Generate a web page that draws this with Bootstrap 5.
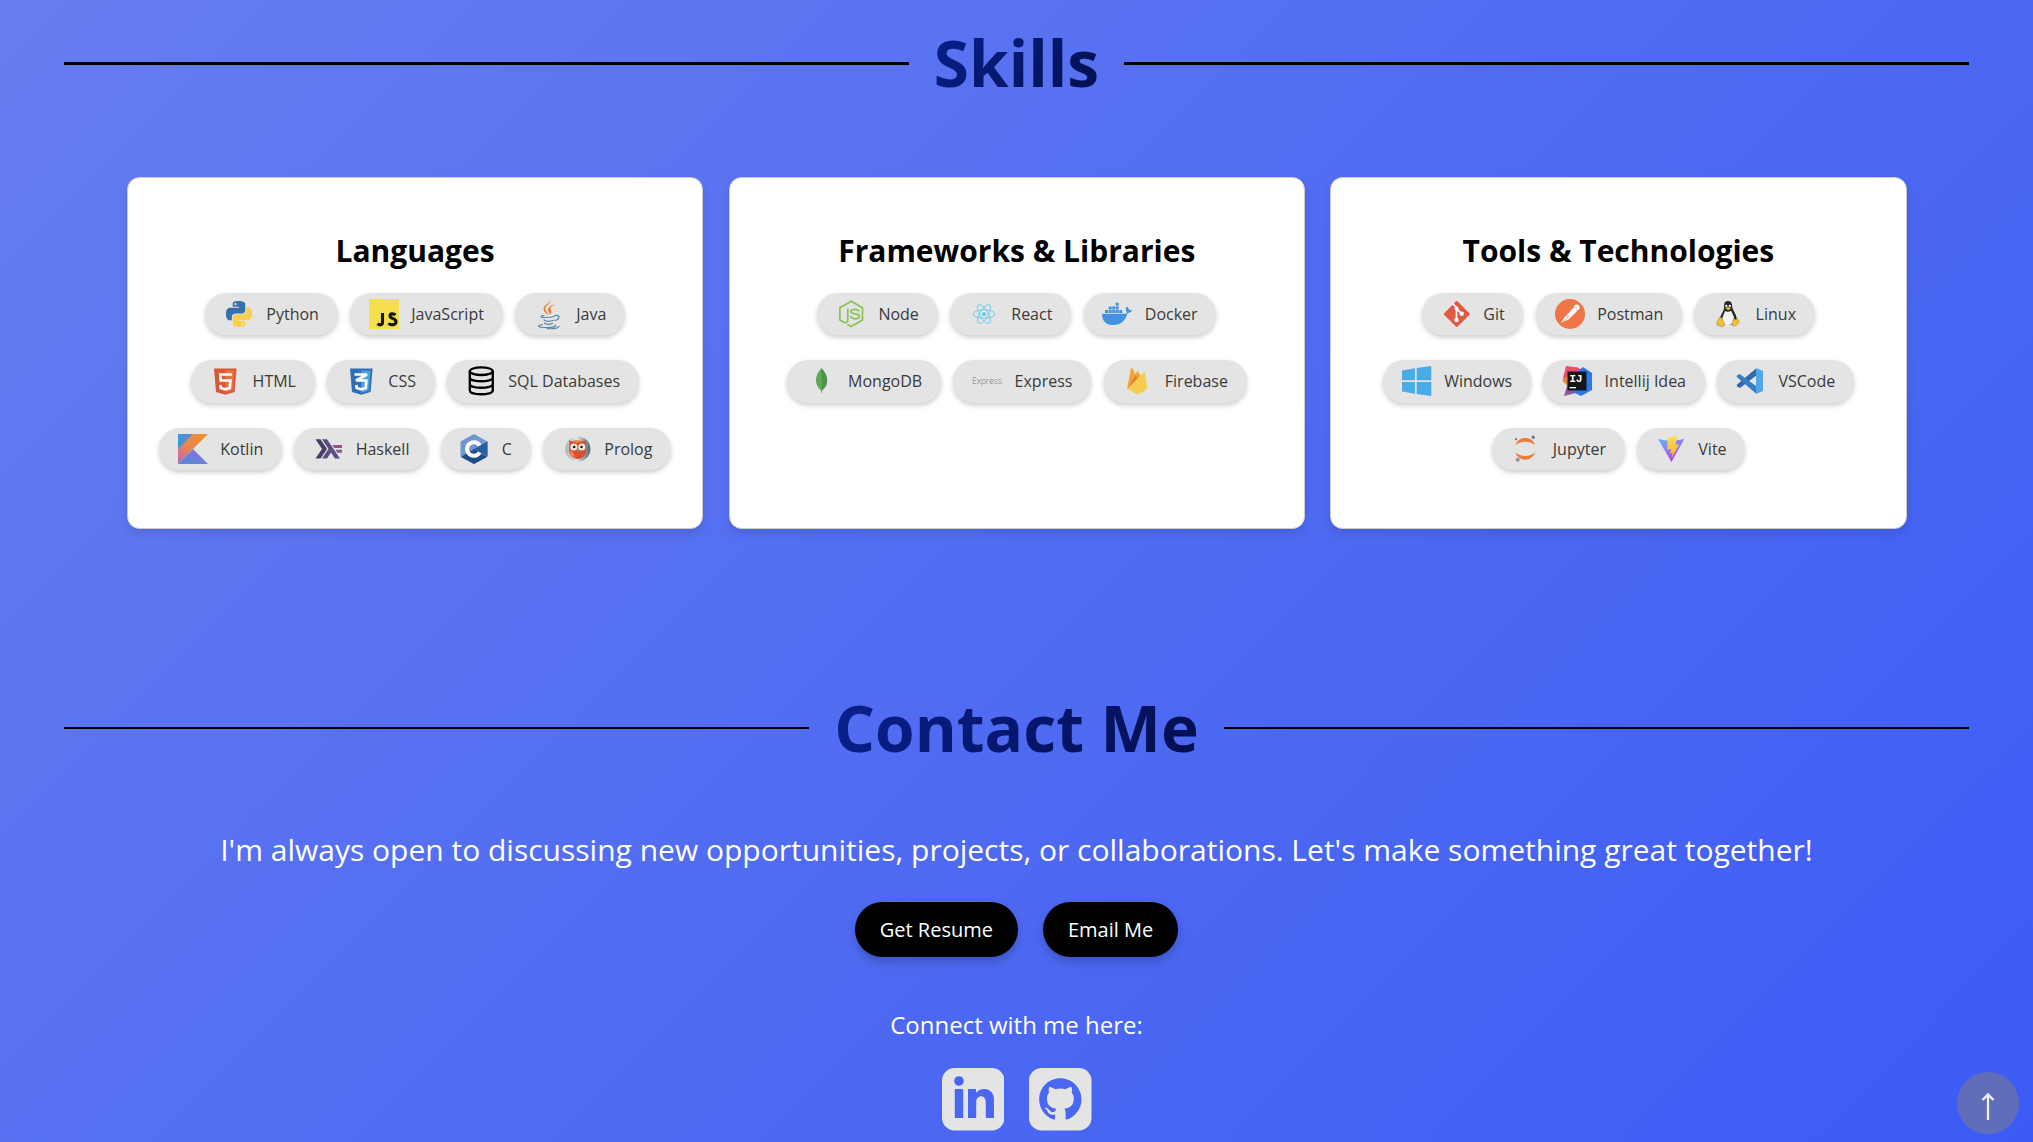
<!DOCTYPE html>
<html lang="en">
<head>
<meta charset="utf-8">
<meta name="viewport" content="width=device-width, initial-scale=1">
<title>Portfolio</title>
<link href="https://cdn.jsdelivr.net/npm/bootstrap@5.3.0/dist/css/bootstrap.min.css" rel="stylesheet">
<style>
html,body{height:100%;overflow:hidden}
body{font-family:"Open Sans","Noto Sans",sans-serif;background:linear-gradient(135deg,#677ef0 0%,#5973f1 30%,#4d69f2 60%,#3c5bf5 100%) no-repeat;color:#fff}
.rule-title{padding:0 64px;gap:25px}
.rule-title h2{font-size:64px;line-height:87px;font-weight:700;margin:-2px 0 0;background:linear-gradient(135deg,#092192,#030e4a);-webkit-background-clip:text;background-clip:text;color:transparent}
.contact-title h2{margin-top:0}
.rule-line{flex:1;height:3px;background:#000}
.rule-line.thin{height:2px}
.skills-title{padding-top:20px;height:107px}
.skill-grid{padding:70px 126.500px 0 127px;gap:25.5px}
.skill-card{flex:1 1 0;height:352px;border:1px solid #ccc;border-radius:12.5px;box-shadow:0 5px 10px rgba(0,0,0,.1);padding-top:52px;color:#000}
.skill-card h3{font-size:30px;line-height:41px;font-weight:700;margin:0 0 21.5px}
.chip-row{gap:12.4px;margin-bottom:25px}
.chip{height:42.5px;padding:0 18.75px;gap:12.5px;border-radius:21px;background:#e4e4e4;color:#3a3a3a;font-size:16px;font-weight:400;box-shadow:0 2.5px 5px rgba(0,0,0,.2);white-space:nowrap}
.chip svg{width:30px;height:30px;flex:none;opacity:.9;overflow:visible}
.contact-title{margin-top:155px;height:87px}
.contact-lead{font-size:30px;line-height:41px;margin:58px 0 32px}
.pill{height:55px;padding:0 25px;border-radius:28px;background:#000;color:#fff;font-size:20px;box-shadow:0 5px 10px rgba(0,0,0,.2);border:0}
.connect{font-size:24px;line-height:34px;margin:51px 0 26px}
.social{gap:25px}
.social svg{width:62.5px;height:62.5px}
.to-top{position:fixed;right:14px;bottom:8px;width:62px;height:62px;border-radius:50%;background:#606eb9}
</style>
<script src="https://cdn.jsdelivr.net/npm/bootstrap@5.3.0/dist/js/bootstrap.bundle.min.js"></script>
</head>
<body>
<section>
<div class="rule-title skills-title d-flex align-items-center"><span class="rule-line"></span><h2>Skills</h2><span class="rule-line"></span></div>
<div class="skill-grid d-flex">

<div class="skill-card bg-white text-center">
<h3>Languages</h3>
<div class="chip-row d-flex justify-content-center">
<span class="chip d-flex align-items-center"><svg viewBox="0 0 30 30"><g transform="translate(2 2) scale(1.08)"><path fill="#2565a8" d="M14.25.18l.9.2.73.26.59.3.45.32.34.34.25.34.16.33.1.3.04.26.02.2-.01.13V8.5l-.05.63-.13.55-.21.46-.26.38-.3.31-.33.25-.35.19-.35.14-.33.1-.3.07-.26.04-.21.02H8.77l-.69.05-.59.14-.5.22-.41.27-.33.32-.27.35-.2.36-.15.37-.1.35-.07.32-.04.27-.02.21v3.06H3.17l-.21-.03-.28-.07-.32-.12-.35-.18-.36-.26-.36-.36-.35-.46-.32-.59-.28-.73-.21-.88-.14-1.05-.05-1.23.06-1.22.16-1.04.24-.87.32-.71.36-.57.4-.44.42-.33.42-.24.4-.16.36-.1.32-.05.24-.01h.16l.06.01h8.16v-.83H6.18l-.01-2.75-.02-.37.05-.34.11-.31.17-.28.25-.26.31-.23.38-.2.44-.18.51-.15.58-.12.64-.1.71-.06.77-.04.84-.02 1.27.05zm-6.3 1.98l-.23.33-.08.41.08.41.23.34.33.22.41.09.41-.09.33-.22.23-.34.08-.41-.08-.41-.23-.33-.33-.22-.41-.09-.41.09z"/><path fill="#fbce3e" d="M21.1 6.11l.28.06.32.12.35.18.36.27.36.35.35.47.32.59.28.73.21.88.14 1.04.05 1.23-.06 1.23-.16 1.04-.24.86-.32.71-.36.57-.4.45-.42.33-.42.24-.4.16-.36.09-.32.05-.24.02-.16-.01h-8.22v.82h5.84l.01 2.76.02.36-.05.34-.11.31-.17.29-.25.25-.31.24-.38.2-.44.17-.51.15-.58.13-.64.09-.71.07-.77.04-.84.01-1.27-.04-1.07-.14-.9-.2-.73-.25-.59-.3-.45-.33-.34-.34-.25-.34-.16-.33-.1-.3-.04-.25-.02-.2.01-.13v-5.34l.05-.64.13-.54.21-.46.26-.38.3-.32.33-.24.35-.2.35-.14.33-.1.3-.06.26-.04.21-.02.13-.01h5.84l.69-.05.59-.14.5-.21.41-.28.33-.32.27-.35.2-.36.15-.36.1-.35.07-.32.04-.28.02-.21V6.07h2.09l.14.01zm-6.47 14.25l-.23.33-.08.41.08.41.23.33.33.23.41.08.41-.08.33-.23.23-.33.08-.41-.08-.41-.23-.33-.33-.23-.41-.08-.41.08z"/></g></svg>Python</span>
<span class="chip d-flex align-items-center"><svg viewBox="0 0 30 30"><path fill="#f5e03c" d="M0 0h30v30H0z"/><path d="M13.500 14v9c0 3.500-3 3.500-5 1.800M26.500 16c-1.700-1.700-5.500-1.600-5.500.9 0 3 6 2 6 5.800 0 3.500-5.500 3.800-7.500 1.500" fill="none" stroke="#000" stroke-width="3.100"/></svg>JavaScript</span>
<span class="chip d-flex align-items-center"><svg viewBox="0 0 30 30" fill="none"><path d="M16.500 0c1.500 5-6.500 6.500-5 10.500.6 2 2.500 3.200 3 5.500-3.500-2-6-5-4.500-8C11.500 5 17 4 16.500 0zM21.500 5.500c-3 1.200-6 3-4.500 5.500 1 1.500 1 3-1.500 5 1-2.500-2.500-3.500-1.500-6 .8-2.500 4-4 7.500-4.500z" fill="#ea7523"/><g stroke="#4b7ea0" stroke-width="1.200" stroke-linecap="round"><path d="M10 16.500c-5 .8-3.500 2 1 2 4 0 7-.3 9.500-1M21 16.500c5-1 5.500 3.500.2 5M10 21c2.500 1.600 7 1.200 9.500.2M10.500 24.200c2 1.300 5.500 1.200 8 .2M8.500 25.500c-7 1.200-4 3 4 3 7 0 11-1 8.500-2.500M13 29.700c5 .2 11-.4 12-2.200"/></g></svg>Java</span>
</div>
<div class="chip-row d-flex justify-content-center">
<span class="chip d-flex align-items-center"><svg viewBox="0 0 30 30"><path fill="#d94a23" d="M4 2.500h22.600l-2 23.500-9.300 2.700L6 26z"/><path fill="#ea6434" d="M15.300 4.500h9.200l-1.700 20-7.500 2.200z"/><path d="M22 8.500H10.300l.5 6h9.600l-.6 7.500-4.500 1.300L10.700 22l-.3-3.200" fill="none" stroke="#fff" stroke-width="2.700"/></svg>HTML</span>
<span class="chip d-flex align-items-center"><svg viewBox="0 0 30 30"><path fill="#1c62b4" d="M4 2.500h22.600l-2 23.500-9.300 2.700L6 26z"/><path fill="#36a0db" d="M15.300 4.500h9.200l-1.700 20-7.500 2.200z"/><path d="M8.500 8.500H21L10 14.500h10.300l-.5 7.500-4.500 1.300L10.700 22l-.3-3" fill="none" stroke="#fff" stroke-width="2.700"/></svg>CSS</span>
<span class="chip d-flex align-items-center"><svg viewBox="0 0 30 30" fill="none" stroke="#000" stroke-width="2.300" class="opacity-100"><ellipse cx="15.300" cy="5.200" rx="11.500" ry="3.800"/><path d="M3.800 5v19.500c0 5 23 5 23 0V5M3.800 11.500c0 5 23 5 23 0M3.800 18c0 5 23 5 23 0"/></svg>SQL Databases</span>
</div>
<div class="chip-row d-flex justify-content-center">
<span class="chip d-flex align-items-center"><svg viewBox="0 0 30 30"><defs><linearGradient id="k1" x1="0" y1="1" x2="1" y2="0"><stop offset="0" stop-color="#bd56b4"/><stop offset=".42" stop-color="#e87b45"/><stop offset="1" stop-color="#f68a09"/></linearGradient><linearGradient id="k2" x1="0" y1="1" x2="1" y2="0"><stop offset="0" stop-color="#3b83dc"/><stop offset="1" stop-color="#8b63dd"/></linearGradient><linearGradient id="k3" x1="0" x2="1"><stop offset="0" stop-color="#2596d2"/><stop offset="1" stop-color="#6472d8"/></linearGradient></defs><path fill="url(#k3)" d="M0 0h16L0 16z"/><path fill="url(#k1)" d="M15 0h15L0 30V15z"/><path fill="url(#k2)" d="M0 30l15-15 15 15z"/></svg>Kotlin</span>
<span class="chip d-flex align-items-center"><svg viewBox="0 0 30 30"><path fill="#382d56" d="M2.500 24.500L9 15 2.500 5.200h5L14 15l-6.500 9.500z"/><path fill="#4f3c78" d="M9 24.500L15.500 15 9 5.200h5l13 19.300h-5L18 18.400l-4 6.100z"/><path fill="#85458b" d="M19.200 11H29v3h-7.800zM22.400 15.700H29v3h-4.600z"/></svg>Haskell</span>
<span class="chip d-flex align-items-center"><svg viewBox="0 0 30 30"><path fill="#648fce" d="M15 0l13.500 7.500v15L15 30 1.500 22.500v-15z"/><path fill="#0b3d7d" d="M2 23l13-8 13 8-13 7z"/><path fill="#14509a" d="M15 15L28.500 7.500v15z"/><path d="M20.700 11.500a6.800 6.800 0 1 0 0 7" fill="none" stroke="#fff" stroke-width="4"/></svg>C</span>
<span class="chip d-flex align-items-center"><svg viewBox="0 0 30 30"><defs><linearGradient id="p1"><stop offset="0" stop-color="#a7afb4"/><stop offset=".45" stop-color="#e0e6e9"/><stop offset="1" stop-color="#405b70"/></linearGradient></defs><circle cx="15.800" cy="15" r="12.600" fill="url(#p1)"/><path fill="#dc401f" d="M7 6c3 2 12 2 17 0-.5 3 .8 6 .3 10-.4 6-4 9-8.500 9S7 21 7 16c0-4 .7-6 0-10z"/><path fill="#f28439" d="M8 16c3 2 4 4 5 8-3-1-5-4-5-8zM11 6l4 3 4-3z"/><circle cx="11.800" cy="13" r="3.500" fill="#f5eee1"/><circle cx="19.800" cy="13" r="3.500" fill="#f5eee1"/><circle cx="12.200" cy="13" r="1.300"/><circle cx="19.500" cy="13" r="1.300"/><path fill="#888" d="M14.500 15h2.800l-1.400 4z"/></svg>Prolog</span>
</div>
</div>

<div class="skill-card bg-white text-center">
<h3>Frameworks &amp; Libraries</h3>
<div class="chip-row d-flex justify-content-center">
<span class="chip d-flex align-items-center"><svg viewBox="0 0 30 30" fill="none" stroke="#83bd3f" stroke-width="1.700"><path d="M11.500 25.500l3.700 2.100 11.300-6.500V8.700L15.200 2.200 3.900 8.700v12.400l3.300 2c3.200 1.500 4.600.2 4.600-2.200V9.500M22.800 12.300c-.6-2.600-7.800-2.800-7.800.2 0 3.500 8.500 1.200 8.500 4.800 0 3.500-8.700 3.300-8.900-.5"/></svg>Node</span>
<span class="chip d-flex align-items-center"><svg viewBox="0 0 30 30" fill="none" stroke="#53c8ee" stroke-width=".85"><ellipse cx="15" cy="15" rx="10.800" ry="4.200"/><ellipse cx="15" cy="15" rx="10.800" ry="4.200" transform="rotate(60 15 15)"/><ellipse cx="15" cy="15" rx="10.800" ry="4.200" transform="rotate(120 15 15)"/><circle cx="15" cy="15" r="2" fill="#53c8ee" stroke="none"/></svg>React</span>
<span class="chip d-flex align-items-center"><svg viewBox="0 0 30 30" fill="#3289e2"><path d="M.2 14.700h22.300c1.200 0 2-.4 2.500-1-1.600-2-1.500-4.500-.3-6.200 1.500 1 2.300 2.200 2.500 3.700 1-.2 2-.1 2.800.4-.8 1.700-2.300 2.400-4.300 2.400C23 22.500 18.500 26 11.500 26 3.500 26-.2 21.500.2 14.700z"/><path d="M3 11h3.100v3H3zM6.700 11h3v3h-3zM10.200 11h3v3h-3zM13.700 11h3v3h-3zM17.300 11h3v3h-3zM6.700 7.400h3v3h-3zM10.200 7.400h3v3h-3zM13.700 7.400h3v3h-3zM13.700 3.700h3v3h-3z"/></svg>Docker</span>
</div>
<div class="chip-row d-flex justify-content-center">
<span class="chip d-flex align-items-center"><svg viewBox="0 0 30 30"><path fill="#4fa349" d="M15.500 2c6.800 8 8.200 16 .5 22.500V27h-.7l-.4-2.500C7.500 18 9 9 15.500 2z"/><path fill="#3e8a3b" d="M15.500 2c6.800 8 8.200 16 .5 22.500z"/></svg>MongoDB</span>
<span class="chip d-flex align-items-center"><svg viewBox="0 0 30 30"><text x="0" y="17.500" font-size="9.500" font-family="Open Sans" font-weight="300" fill="#666" textLength="30" lengthAdjust="spacingAndGlyphs">Express</text></svg>Express</span>
<span class="chip d-flex align-items-center"><svg viewBox="0 0 30 30"><path fill="#f5a02c" d="M5 23L9 2c.3-.7 1-.7 1.300 0l3.400 6.600z"/><path fill="#f79d1e" d="M5 23L15 5.500c.3-.5.900-.5 1.200 0l3.800 7z"/><path fill="#e9761d" d="M5 23l8.500-14.300 3 5.800z"/><path fill="#f9ca42" d="M5 23L21.800 6.600c.5-.5 1.200-.2 1.300.5L25.500 23l-9 5c-.8.500-1.500.5-2.300 0z"/></svg>Firebase</span>
</div>
</div>

<div class="skill-card bg-white text-center">
<h3>Tools &amp; Technologies</h3>
<div class="chip-row d-flex justify-content-center">
<span class="chip d-flex align-items-center"><svg viewBox="0 0 30 30"><rect x="6.300" y="5.600" width="19" height="19" rx="1.300" transform="rotate(45 15.800 15.100)" fill="#df4b33"/><path d="M11.500 4.500l4 4.200v13M15.500 9.500l5 5.200" fill="none" stroke="#fff" stroke-width="1.700"/><g fill="#fff"><circle cx="15.500" cy="9.500" r="2"/><circle cx="15.500" cy="21" r="2.200"/><circle cx="20.700" cy="14.800" r="2.200"/></g></svg>Git</span>
<span class="chip d-flex align-items-center"><svg viewBox="0 0 30 30"><circle cx="15" cy="15" r="15" fill="#f26b3a"/><path fill="#fff" d="M18.500 8.500l3.500 3.700-8.500 8.300-5.500 2.500-1.800.8 2.500-4.300z"/><circle cx="21.700" cy="8.400" r="2.800" fill="#fff"/><path d="M12 16.500l1.800 2M8.500 22.500l5.500-5.500M20.500 8l1.800 2" stroke="#f26b3a" stroke-width=".6" fill="none"/></svg>Postman</span>
<span class="chip d-flex align-items-center"><svg viewBox="0 0 30 30"><path fill="#111" d="M15 2c3.500 0 4.300 3 4.200 6 .2 3 5.300 8 4.600 14-1 5-15 5.500-17 0-.8-5 4-9 4.300-13C11 5 11.200 2 15 2z"/><path fill="#f4f4f4" d="M12 12c2 1.200 4.500 1 6.200-.3 1 3 3.600 6 3 10-1.200 5.500-10.500 6-12.200.5 0-4 2-7 3-10.200z"/><circle cx="13.300" cy="7" r="1.300" fill="#ddd"/><circle cx="16.800" cy="7" r="1.300" fill="#ddd"/><path fill="#f5bd20" stroke="#6b5316" stroke-width=".4" d="M12.300 9.300L15 8l3 1.300-2.700 2zM4.300 21.500l3-3.500c2 1 3 4 4.200 6.500.3 2.500-1.500 3.500-3.500 3l-4-1.500zM20.500 19.500c1.700 1.500 3.300.8 3.800 0l2 3c-.2 1.700-3 3.700-5 4.700-2.500.3-2.700-3-.8-7.700z"/></svg>Linux</span>
</div>
<div class="chip-row d-flex justify-content-center">
<span class="chip d-flex align-items-center"><svg viewBox="0 0 30 30" fill="#3aa4e8"><path d="M0 4.500L13 2.300v11.900H0zM14.700 2L29.300 0v14.200H14.700zM0 15.900h13v11.800L0 25.500zM14.700 15.900h14.600V30l-14.600-2z"/></svg>Windows</span>
<span class="chip d-flex align-items-center"><svg viewBox="0 0 30 30"><path fill="#f03d5c" d="M4 0l12 1.500L24 8 7 18 1 12z"/><path fill="#ed7928" d="M0 14l8-5v14z"/><path fill="#874a98" d="M2 30l3-10h13v6z"/><path fill="#176cf0" d="M16 5l5-4 9 6v17l-11 6-8-4z"/><path d="M5.500 5.500h19v19h-19z"/><path fill="#fff" d="M7.500 21h6.500v1.300H7.500z"/><text x="7.300" y="16" font-family="Liberation Mono" font-weight="700" font-size="11.500" fill="#fff" letter-spacing="-.5">IJ</text></svg>Intellij Idea</span>
<span class="chip d-flex align-items-center"><svg viewBox="0 0 30 30"><path fill="#1e5da5" d="M20 2.500v7.300L4 22 .8 20.200v-1.500z"/><path fill="#2474be" d="M.8 9.500L3.700 8 20 20v7.500L.8 11z"/><path fill="#42a0e9" d="M20 2l7 3v20l-7 3z"/></svg>VSCode</span>
</div>
<div class="chip-row d-flex justify-content-center">
<span class="chip d-flex align-items-center"><svg viewBox="0 0 30 30"><path fill="#ed7125" d="M5.500 11C8 1.500 22.500 1.500 25 11 20 6.500 10.500 6.500 5.500 11zM5.500 18.500C10.500 23 20 23 25 18.500 22.500 28 8 28 5.500 18.500z"/><circle cx="23.200" cy="3.200" r="1.600" fill="#666"/><circle cx="6" cy="5.200" r="1.100" fill="#666"/><circle cx="7.700" cy="25.800" r="2" fill="#888"/></svg>Jupyter</span>
<span class="chip d-flex align-items-center"><svg viewBox="0 0 30 30"><defs><linearGradient id="v1" x1="0" y1="0" x2=".6" y2="1"><stop offset="0" stop-color="#56b5ff"/><stop offset="1" stop-color="#b329f5"/></linearGradient><linearGradient id="v2" x1="0" y1="0" x2="0" y2="1"><stop offset="0" stop-color="#fce04a"/><stop offset="1" stop-color="#f6a81c"/></linearGradient></defs><path fill="url(#v1)" d="M2 5l13.200 2.300L28.300 5 15.500 28z"/><path fill="url(#v2)" d="M21.500 1.800l-9.800 2-.7 12 4-.8-1 4.500 2.500-.5-.7 5 7.500-14-4 .8z"/></svg>Vite</span>
</div>
</div>
</div>
</section>

<section class="text-center">
<div class="rule-title contact-title d-flex align-items-center"><span class="rule-line thin"></span><h2>Contact Me</h2><span class="rule-line thin"></span></div>
<p class="contact-lead">I'm always open to discussing new opportunities, projects, or collaborations. Let's make something great together!</p>
<div class="d-flex justify-content-center social"><button class="pill">Get Resume</button><button class="pill">Email Me</button></div>
<p class="connect">Connect with me here:</p>
<div class="d-flex justify-content-center social">
<svg viewBox="0 0 62.500 62.500"><rect width="62.500" height="62.500" rx="12.500" fill="#e4e4e4"/><g fill="#4a67f2"><circle cx="17" cy="13" r="4.800"/><path d="M12.800 21h8.400v29h-8.400zM26 21h8v4c4-6.500 18-6 18 6.500V50h-8.200V34.500c0-8.500-9.600-8-9.600 0V50H26z"/></g></svg>
<svg viewBox="0 0 62.500 62.500"><rect width="62.500" height="62.500" rx="12.500" fill="#e4e4e4"/><path fill="#4a67f2" transform="translate(10.200 10.300) scale(2.640)" d="M8 0C3.580 0 0 3.580 0 8c0 3.540 2.290 6.530 5.470 7.590.4.070.55-.17.55-.38 0-.19-.01-.82-.01-1.490-2.010.37-2.530-.49-2.690-.94-.09-.23-.48-.94-.82-1.130-.28-.15-.68-.52-.01-.53.63-.01 1.080.58 1.230.82.72 1.210 1.870.87 2.330.66.07-.52.28-.87.51-1.070-1.780-.2-3.640-.89-3.640-3.950 0-.87.31-1.590.82-2.150-.08-.2-.36-1.020.08-2.120 0 0 .67-.21 2.200.82.64-.18 1.320-.27 2-.27s1.360.09 2 .27c1.530-1.040 2.200-.82 2.200-.82.44 1.100.16 1.920.08 2.120.51.56.82 1.270.82 2.150 0 3.070-1.870 3.750-3.650 3.950.29.25.54.73.54 1.480 0 1.070-.01 1.930-.01 2.200 0 .21.15.46.55.38A8.010 8.010 0 0 0 16 8c0-4.420-3.580-8-8-8z"/></svg>
</div>
</section>
<div class="to-top"><svg width="62" height="62" viewBox="0 0 62 62" fill="none" stroke="#eef0fa" stroke-width="2.300"><path d="M31 48V22M25.500 28L31 22.500l5.500 5.500"/></svg></div>
</body>
</html>
